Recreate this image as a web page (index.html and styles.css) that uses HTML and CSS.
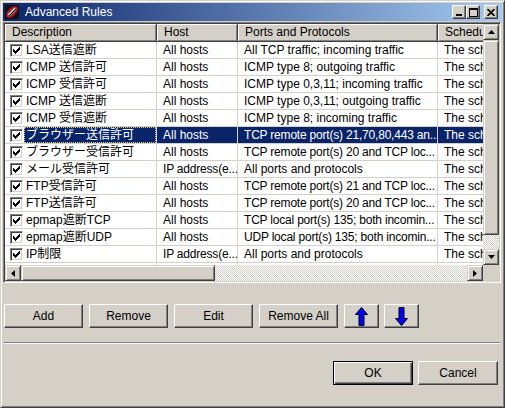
FILE: index.html
```html
<!DOCTYPE html>
<html lang="ja">
<head>
<meta charset="utf-8">
<title>Advanced Rules</title>
<link rel="stylesheet" href="styles.css">
</head>
<body>
<div class="window">
  <div class="titlebar">
    <svg class="app-icon" width="16" height="16" viewBox="0 0 16 16">
      <rect x="1" y="1" width="14" height="14" fill="#141414"/>
      <ellipse cx="8" cy="8" rx="7.2" ry="3.8" transform="rotate(-45 8 8)" fill="#c8141c"/>
      <ellipse cx="8" cy="8" rx="5" ry="2" transform="rotate(-45 8 8)" fill="#141414"/>
      <line x1="4" y1="11" x2="11" y2="4" stroke="#e6e6e6" stroke-width="1.4"/>
      <line x1="6" y1="12" x2="12" y2="6" stroke="#9a9a9a" stroke-width="0.9"/>
    </svg>
    <span class="title">Advanced Rules</span>
    <div class="caption-btns">
      <div class="cap-btn"><svg width="8" height="8" viewBox="0 0 8 8"><rect x="1" y="6" width="6" height="2" fill="#000"/></svg></div>
      <div class="cap-btn"><svg width="9" height="9" viewBox="0 0 9 9"><rect x="0.5" y="0.5" width="8" height="8" fill="none" stroke="#000"/><rect x="0" y="1" width="9" height="1" fill="#000"/></svg></div>
      <div class="cap-btn close"><svg width="8" height="7" viewBox="0 0 8 7"><path d="M0.5 0 L7.5 7 M7.5 0 L0.5 7" stroke="#000" stroke-width="1.7"/></svg></div>
    </div>
  </div>

  <div class="content">
    <div class="list">
      <div class="list-main">
        <div class="viewport">
          <div class="row header">
            <div class="hcell c1">Description</div>
            <div class="hcell c2">Host</div>
            <div class="hcell c3">Ports and Protocols</div>
            <div class="hcell c4">Schedule</div>
          </div>
          <div class="row"><div class="cell c1 desc"><span class="check"><svg width="7" height="7" viewBox="0 0 7 7" shape-rendering="crispEdges"><path d="M6 0h1v1h-1z M5 1h2v1h-2z M0 2h1v1h-1z M4 2h3v1h-3z M0 3h2v1h-2z M3 3h3v1h-3z M0 4h5v1h-5z M1 5h3v1h-3z M2 6h1v1h-1z" fill="#000"/></svg></span><span class="desc-text">LSA送信遮断</span></div><div class="cell c2">All hosts</div><div class="cell c3">All TCP traffic; incoming traffic</div><div class="cell c4">The schedule</div></div>
          <div class="row"><div class="cell c1 desc"><span class="check"><svg width="7" height="7" viewBox="0 0 7 7" shape-rendering="crispEdges"><path d="M6 0h1v1h-1z M5 1h2v1h-2z M0 2h1v1h-1z M4 2h3v1h-3z M0 3h2v1h-2z M3 3h3v1h-3z M0 4h5v1h-5z M1 5h3v1h-3z M2 6h1v1h-1z" fill="#000"/></svg></span><span class="desc-text">ICMP 送信許可</span></div><div class="cell c2">All hosts</div><div class="cell c3">ICMP type 8; outgoing traffic</div><div class="cell c4">The schedule</div></div>
          <div class="row"><div class="cell c1 desc"><span class="check"><svg width="7" height="7" viewBox="0 0 7 7" shape-rendering="crispEdges"><path d="M6 0h1v1h-1z M5 1h2v1h-2z M0 2h1v1h-1z M4 2h3v1h-3z M0 3h2v1h-2z M3 3h3v1h-3z M0 4h5v1h-5z M1 5h3v1h-3z M2 6h1v1h-1z" fill="#000"/></svg></span><span class="desc-text">ICMP 受信許可</span></div><div class="cell c2">All hosts</div><div class="cell c3">ICMP type 0,3,11; incoming traffic</div><div class="cell c4">The schedule</div></div>
          <div class="row"><div class="cell c1 desc"><span class="check"><svg width="7" height="7" viewBox="0 0 7 7" shape-rendering="crispEdges"><path d="M6 0h1v1h-1z M5 1h2v1h-2z M0 2h1v1h-1z M4 2h3v1h-3z M0 3h2v1h-2z M3 3h3v1h-3z M0 4h5v1h-5z M1 5h3v1h-3z M2 6h1v1h-1z" fill="#000"/></svg></span><span class="desc-text">ICMP 送信遮断</span></div><div class="cell c2">All hosts</div><div class="cell c3">ICMP type 0,3,11; outgoing traffic</div><div class="cell c4">The schedule</div></div>
          <div class="row"><div class="cell c1 desc"><span class="check"><svg width="7" height="7" viewBox="0 0 7 7" shape-rendering="crispEdges"><path d="M6 0h1v1h-1z M5 1h2v1h-2z M0 2h1v1h-1z M4 2h3v1h-3z M0 3h2v1h-2z M3 3h3v1h-3z M0 4h5v1h-5z M1 5h3v1h-3z M2 6h1v1h-1z" fill="#000"/></svg></span><span class="desc-text">ICMP 受信遮断</span></div><div class="cell c2">All hosts</div><div class="cell c3">ICMP type 8; incoming traffic</div><div class="cell c4">The schedule</div></div>
          <div class="row selected"><div class="cell c1 desc"><span class="check"><svg width="7" height="7" viewBox="0 0 7 7" shape-rendering="crispEdges"><path d="M6 0h1v1h-1z M5 1h2v1h-2z M0 2h1v1h-1z M4 2h3v1h-3z M0 3h2v1h-2z M3 3h3v1h-3z M0 4h5v1h-5z M1 5h3v1h-3z M2 6h1v1h-1z" fill="#000"/></svg></span><span class="desc-text">ブラウザー送信許可</span></div><div class="cell c2">All hosts</div><div class="cell c3 tight">TCP remote port(s) 21,70,80,443 an...</div><div class="cell c4">The schedule</div></div>
          <div class="row"><div class="cell c1 desc"><span class="check"><svg width="7" height="7" viewBox="0 0 7 7" shape-rendering="crispEdges"><path d="M6 0h1v1h-1z M5 1h2v1h-2z M0 2h1v1h-1z M4 2h3v1h-3z M0 3h2v1h-2z M3 3h3v1h-3z M0 4h5v1h-5z M1 5h3v1h-3z M2 6h1v1h-1z" fill="#000"/></svg></span><span class="desc-text">ブラウザー受信許可</span></div><div class="cell c2">All hosts</div><div class="cell c3 tight">TCP remote port(s) 20 and TCP loc...</div><div class="cell c4">The schedule</div></div>
          <div class="row"><div class="cell c1 desc"><span class="check"><svg width="7" height="7" viewBox="0 0 7 7" shape-rendering="crispEdges"><path d="M6 0h1v1h-1z M5 1h2v1h-2z M0 2h1v1h-1z M4 2h3v1h-3z M0 3h2v1h-2z M3 3h3v1h-3z M0 4h5v1h-5z M1 5h3v1h-3z M2 6h1v1h-1z" fill="#000"/></svg></span><span class="desc-text">メール受信許可</span></div><div class="cell c2 tight">IP address(e...</div><div class="cell c3">All ports and protocols</div><div class="cell c4">The schedule</div></div>
          <div class="row"><div class="cell c1 desc"><span class="check"><svg width="7" height="7" viewBox="0 0 7 7" shape-rendering="crispEdges"><path d="M6 0h1v1h-1z M5 1h2v1h-2z M0 2h1v1h-1z M4 2h3v1h-3z M0 3h2v1h-2z M3 3h3v1h-3z M0 4h5v1h-5z M1 5h3v1h-3z M2 6h1v1h-1z" fill="#000"/></svg></span><span class="desc-text">FTP受信許可</span></div><div class="cell c2">All hosts</div><div class="cell c3 tight">TCP remote port(s) 21 and TCP loc...</div><div class="cell c4">The schedule</div></div>
          <div class="row"><div class="cell c1 desc"><span class="check"><svg width="7" height="7" viewBox="0 0 7 7" shape-rendering="crispEdges"><path d="M6 0h1v1h-1z M5 1h2v1h-2z M0 2h1v1h-1z M4 2h3v1h-3z M0 3h2v1h-2z M3 3h3v1h-3z M0 4h5v1h-5z M1 5h3v1h-3z M2 6h1v1h-1z" fill="#000"/></svg></span><span class="desc-text">FTP送信許可</span></div><div class="cell c2">All hosts</div><div class="cell c3 tight">TCP remote port(s) 20 and TCP loc...</div><div class="cell c4">The schedule</div></div>
          <div class="row"><div class="cell c1 desc"><span class="check"><svg width="7" height="7" viewBox="0 0 7 7" shape-rendering="crispEdges"><path d="M6 0h1v1h-1z M5 1h2v1h-2z M0 2h1v1h-1z M4 2h3v1h-3z M0 3h2v1h-2z M3 3h3v1h-3z M0 4h5v1h-5z M1 5h3v1h-3z M2 6h1v1h-1z" fill="#000"/></svg></span><span class="desc-text">epmap遮断TCP</span></div><div class="cell c2">All hosts</div><div class="cell c3 tight">TCP local port(s) 135; both incomin...</div><div class="cell c4">The schedule</div></div>
          <div class="row"><div class="cell c1 desc"><span class="check"><svg width="7" height="7" viewBox="0 0 7 7" shape-rendering="crispEdges"><path d="M6 0h1v1h-1z M5 1h2v1h-2z M0 2h1v1h-1z M4 2h3v1h-3z M0 3h2v1h-2z M3 3h3v1h-3z M0 4h5v1h-5z M1 5h3v1h-3z M2 6h1v1h-1z" fill="#000"/></svg></span><span class="desc-text">epmap遮断UDP</span></div><div class="cell c2">All hosts</div><div class="cell c3 tight">UDP local port(s) 135; both incomin...</div><div class="cell c4">The schedule</div></div>
          <div class="row"><div class="cell c1 desc"><span class="check"><svg width="7" height="7" viewBox="0 0 7 7" shape-rendering="crispEdges"><path d="M6 0h1v1h-1z M5 1h2v1h-2z M0 2h1v1h-1z M4 2h3v1h-3z M0 3h2v1h-2z M3 3h3v1h-3z M0 4h5v1h-5z M1 5h3v1h-3z M2 6h1v1h-1z" fill="#000"/></svg></span><span class="desc-text">IP制限</span></div><div class="cell c2 tight">IP address(e...</div><div class="cell c3">All ports and protocols</div><div class="cell c4">The schedule</div></div>
          <div class="row"><div class="cell c1"></div><div class="cell c2"></div><div class="cell c3"></div><div class="cell c4"></div></div>
        </div>
        <div class="vscroll">
          <div class="sb-btn"><svg width="7" height="4" viewBox="0 0 7 4"><polygon points="3.5,0 7,4 0,4" fill="#000"/></svg></div>
          <div class="sb-thumb vthumb"></div>
          <div class="sb-track"></div>
          <div class="sb-btn"><svg width="7" height="4" viewBox="0 0 7 4"><polygon points="0,0 7,0 3.5,4" fill="#000"/></svg></div>
        </div>
      </div>
      <div class="hbar">
        <div class="hscroll">
          <div class="sb-btn"><svg width="4" height="7" viewBox="0 0 4 7"><polygon points="0,3.5 4,0 4,7" fill="#000"/></svg></div>
          <div class="sb-thumb hthumb"></div>
          <div class="sb-track"></div>
          <div class="sb-btn"><svg width="4" height="7" viewBox="0 0 4 7"><polygon points="0,0 4,3.5 0,7" fill="#000"/></svg></div>
        </div>
        <div class="corner"></div>
      </div>
    </div>

    <div class="actions">
      <div class="btn">Add</div>
      <div class="btn">Remove</div>
      <div class="btn">Edit</div>
      <div class="btn">Remove All</div>
      <div class="btn arrow up"><svg width="13" height="19" viewBox="0 0 13 19"><polygon points="6.5,0.5 12.5,7.5 9,7.5 9,18.5 4,18.5 4,7.5 0.5,7.5" fill="#0000ff" stroke="#000" stroke-width="1"/></svg></div>
      <div class="btn arrow down"><svg width="13" height="19" viewBox="0 0 13 19"><polygon points="4,0.5 9,0.5 9,11.5 12.5,11.5 6.5,18.5 0.5,11.5 4,11.5" fill="#0000ff" stroke="#000" stroke-width="1"/></svg></div>
    </div>

    <div class="sep"></div>

    <div class="dialog-btns">
      <div class="btn default">OK</div>
      <div class="btn">Cancel</div>
    </div>
  </div>
</div>
</body>
</html>
```

FILE: styles.css
```css
* { box-sizing: border-box; }
html, body { margin: 0; padding: 0; }
body {
  width: 505px;
  height: 408px;
  overflow: hidden;
  background: #d4d0c8;
  font-family: "Liberation Sans", "Noto Sans CJK JP", sans-serif;
  font-size: 12px;
  color: #000;
}
.window {
  width: 505px;
  height: 408px;
  background: #d4d0c8;
  border: 1px solid;
  border-color: #d4d0c8 #404040 #404040 #d4d0c8;
  box-shadow: inset 1px 1px #fff, inset -1px -1px #808080;
  padding: 2px;
  display: flex;
  flex-direction: column;
}

/* title bar */
.titlebar {
  height: 18px;
  flex: none;
  display: flex;
  align-items: center;
  padding-left: 1px;
  background: linear-gradient(to right, #0a246a, #a6caf0);
}
.app-icon { flex: none; margin-right: 5px; }
.title {
  flex: 1;
  color: #fff;
  font-size: 12px;
  line-height: 18px;
  white-space: nowrap;
}
.caption-btns { display: flex; margin-right: 4px; }
.cap-btn {
  width: 14px;
  height: 14px;
  background: #d4d0c8;
  border: 1px solid;
  border-color: #fff #404040 #404040 #fff;
  box-shadow: inset -1px -1px #808080;
  display: flex;
  align-items: center;
  justify-content: center;
}
.cap-btn.close { margin-left: 4px; }
.cap-btn svg { display: block; }

/* content */
.content {
  flex: 1;
  display: flex;
  flex-direction: column;
}
.list {
  margin-top: 1px;
  width: 498px;
  height: 261px;
  border: 1px solid;
  border-color: #808080 #fff #fff #808080;
  padding: 1px;
  box-shadow: inset 1px 1px #404040, inset -1px -1px #d4d0c8;
  background: #fff;
  display: flex;
  flex-direction: column;
}
.list-main { display: flex; height: 241px; flex: none; }
.viewport { flex: 1; overflow: hidden; background: #fff; min-width: 0; }
.vscroll { width: 16px; flex: none; display: flex; flex-direction: column; }
.hbar { display: flex; height: 16px; flex: none; }
.hscroll { flex: 1; display: flex; }
.corner { width: 16px; flex: none; background: #d4d0c8; }

.sb-btn {
  width: 16px;
  height: 16px;
  flex: none;
  background: #d4d0c8;
  border: 1px solid;
  border-color: #d4d0c8 #404040 #404040 #d4d0c8;
  box-shadow: inset 1px 1px #fff, inset -1px -1px #808080;
  display: flex;
  align-items: center;
  justify-content: center;
}
.sb-btn svg { display: block; }
.sb-thumb {
  flex: none;
  background: #d4d0c8;
  border: 1px solid;
  border-color: #d4d0c8 #404040 #404040 #d4d0c8;
  box-shadow: inset 1px 1px #fff, inset -1px -1px #808080;
}
.vthumb { height: 195px; }
.hthumb { width: 194px; }
.sb-track {
  flex: 1;
  background-color: #d4d0c8;
  background-image: conic-gradient(#fff 25%, #d4d0c8 0 50%, #fff 0 75%, #d4d0c8 0);
  background-size: 2px 2px;
}

/* list rows */
.row {
  display: flex;
  width: max-content;
  height: 17px;
  border-bottom: 1px solid #d4d0c8;
}
.row.header { height: 18px; border-bottom: 0; }
.c1 { width: 152px; }
.c2 { width: 81px; }
.c3 { width: 200px; }
.c4 { width: 100px; }
.hcell {
  flex: none;
  height: 18px;
  background: #d4d0c8;
  border-right: 1px solid #404040;
  border-bottom: 1px solid #404040;
  box-shadow: inset 1px 1px #fff, inset -1px -1px #808080;
  padding-left: 7px;
  line-height: 16px;
  white-space: nowrap;
  overflow: hidden;
}
.cell {
  flex: none;
  height: 16px;
  border-right: 1px solid #d4d0c8;
  padding-left: 6px;
  line-height: 16px;
  white-space: nowrap;
  overflow: hidden;
}
.cell.tight { letter-spacing: -0.2px; }
.cell.desc {
  display: flex;
  align-items: center;
  padding-left: 5px;
}
.check {
  flex: none;
  width: 13px;
  height: 13px;
  background: #fff;
  border: 1px solid;
  border-color: #808080 #fff #fff #808080;
  box-shadow: inset 1px 1px #404040, inset -1px -1px #d4d0c8;
  display: flex;
  align-items: center;
  justify-content: center;
}
.check svg { display: block; }
.desc-text {
  flex: 1;
  height: 16px;
  margin-left: 1px;
  padding-left: 1px;
  border: 1px solid transparent;
  line-height: 14px;
  white-space: nowrap;
  overflow: hidden;
}
.row.selected .desc-text {
  background: #0a246a;
  color: #fff;
  border: 1px dotted #d8d080;
}
.row.selected .c2,
.row.selected .c3,
.row.selected .c4 {
  background: #0a246a;
  color: #fff;
}

/* buttons */
.actions {
  display: flex;
  margin-top: 21px;
  margin-left: 1px;
  height: 24px;
  flex: none;
}
.btn {
  width: 79px;
  height: 24px;
  flex: none;
  background: #d4d0c8;
  border: 1px solid;
  border-color: #fff #404040 #404040 #fff;
  box-shadow: inset -1px -1px #808080;
  display: flex;
  align-items: center;
  justify-content: center;
  font-size: 12px;
  white-space: nowrap;
}
.actions .btn + .btn { margin-left: 6px; }
.actions .btn.arrow { width: 35px; }
.actions .btn.down { margin-left: 5px; }
.btn svg { display: block; }

.sep {
  flex: none;
  margin-top: 14px;
  margin-left: 1px;
  width: 496px;
  height: 2px;
  border-top: 1px solid #808080;
  border-bottom: 1px solid #fff;
}
.dialog-btns {
  display: flex;
  justify-content: flex-end;
  margin-top: 17px;
  padding-right: 4px;
  flex: none;
}
.dialog-btns .btn { width: 80px; }
.dialog-btns .btn + .btn { margin-left: 5px; }
.btn.default {
  border: 1px solid #000;
  box-shadow: inset 1px 1px #fff, inset -1px -1px #404040, inset -2px -2px #808080;
}
```
